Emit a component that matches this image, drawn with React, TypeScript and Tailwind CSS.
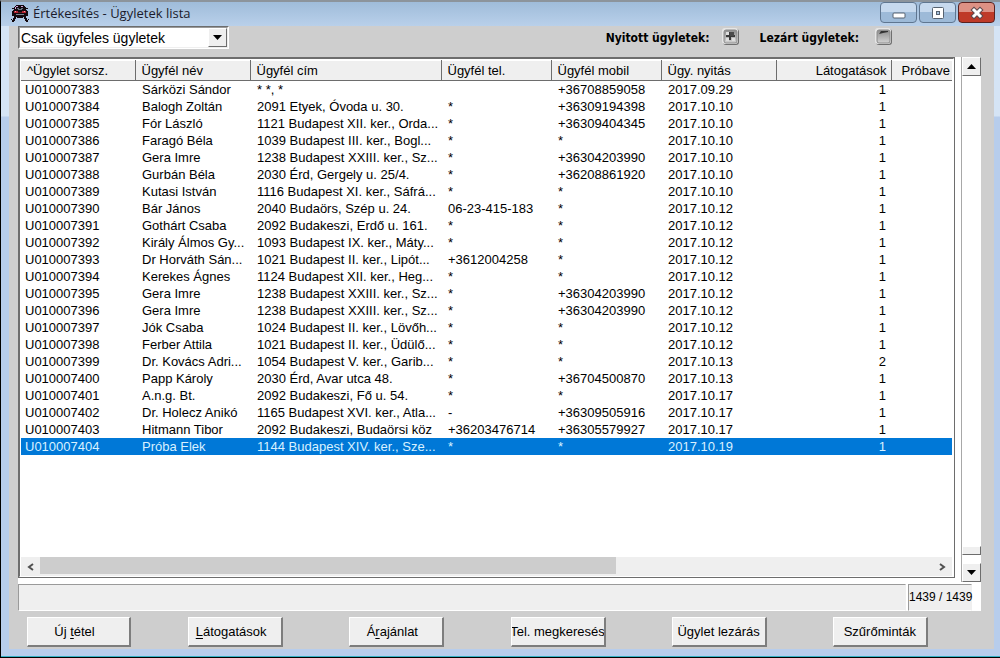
import { useState } from "react";
import clsx from "clsx";

interface Deal {
  id: string;
  name: string;
  address: string;
  phone: string;
  mobile: string;
  opened: string;
  visits: number;
}

const deals: Deal[] = [
  { id: "U010007383", name: "Sárközi Sándor", address: "* *, *", phone: "", mobile: "+36708859058", opened: "2017.09.29", visits: 1 },
  { id: "U010007384", name: "Balogh Zoltán", address: "2091 Etyek, Óvoda u. 30.", phone: "*", mobile: "+36309194398", opened: "2017.10.10", visits: 1 },
  { id: "U010007385", name: "Fór László", address: "1121 Budapest XII. ker., Orda...", phone: "*", mobile: "+36309404345", opened: "2017.10.10", visits: 1 },
  { id: "U010007386", name: "Faragó Béla", address: "1039 Budapest III. ker., Bogl...", phone: "*", mobile: "*", opened: "2017.10.10", visits: 1 },
  { id: "U010007387", name: "Gera Imre", address: "1238 Budapest XXIII. ker., Sz...", phone: "*", mobile: "+36304203990", opened: "2017.10.10", visits: 1 },
  { id: "U010007388", name: "Gurbán Béla", address: "2030 Érd, Gergely u. 25/4.", phone: "*", mobile: "+36208861920", opened: "2017.10.10", visits: 1 },
  { id: "U010007389", name: "Kutasi István", address: "1116 Budapest XI. ker., Sáfrá...", phone: "*", mobile: "*", opened: "2017.10.10", visits: 1 },
  { id: "U010007390", name: "Bár János", address: "2040 Budaörs, Szép u. 24.", phone: "06-23-415-183", mobile: "*", opened: "2017.10.12", visits: 1 },
  { id: "U010007391", name: "Gothárt Csaba", address: "2092 Budakeszi, Erdő u. 161.", phone: "*", mobile: "*", opened: "2017.10.12", visits: 1 },
  { id: "U010007392", name: "Király Álmos Gy...", address: "1093 Budapest IX. ker., Máty...", phone: "*", mobile: "*", opened: "2017.10.12", visits: 1 },
  { id: "U010007393", name: "Dr Horváth Sán...", address: "1021 Budapest II. ker., Lipót...", phone: "+3612004258", mobile: "*", opened: "2017.10.12", visits: 1 },
  { id: "U010007394", name: "Kerekes Ágnes", address: "1124 Budapest XII. ker., Heg...", phone: "*", mobile: "*", opened: "2017.10.12", visits: 1 },
  { id: "U010007395", name: "Gera Imre", address: "1238 Budapest XXIII. ker., Sz...", phone: "*", mobile: "+36304203990", opened: "2017.10.12", visits: 1 },
  { id: "U010007396", name: "Gera Imre", address: "1238 Budapest XXIII. ker., Sz...", phone: "*", mobile: "+36304203990", opened: "2017.10.12", visits: 1 },
  { id: "U010007397", name: "Jók Csaba", address: "1024 Budapest II. ker., Lövőh...", phone: "*", mobile: "*", opened: "2017.10.12", visits: 1 },
  { id: "U010007398", name: "Ferber Attila", address: "1021 Budapest II. ker., Üdülő...", phone: "*", mobile: "*", opened: "2017.10.12", visits: 1 },
  { id: "U010007399", name: "Dr. Kovács Adri...", address: "1054 Budapest V. ker., Garib...", phone: "*", mobile: "*", opened: "2017.10.13", visits: 2 },
  { id: "U010007400", name: "Papp Károly", address: "2030 Érd, Avar utca 48.", phone: "*", mobile: "+36704500870", opened: "2017.10.13", visits: 1 },
  { id: "U010007401", name: "A.n.g. Bt.", address: "2092 Budakeszi, Fő u. 54.", phone: "*", mobile: "*", opened: "2017.10.17", visits: 1 },
  { id: "U010007402", name: "Dr. Holecz Anikó", address: "1165 Budapest XVI. ker., Atla...", phone: "-", mobile: "+36309505916", opened: "2017.10.17", visits: 1 },
  { id: "U010007403", name: "Hitmann Tibor", address: "2092 Budakeszi, Budaörsi köz", phone: "+36203476714", mobile: "+36305579927", opened: "2017.10.17", visits: 1 },
  { id: "U010007404", name: "Próba Elek", address: "1144 Budapest XIV. ker., Sze...", phone: "*", mobile: "*", opened: "2017.10.19", visits: 1 },
];

const columns = [
  { label: "^Ügylet sorsz.", width: "w-[114px]", align: "text-left" },
  { label: "Ügyfél név", width: "w-[115px]", align: "text-left" },
  { label: "Ügyfél cím", width: "w-[191px]", align: "text-left" },
  { label: "Ügyfél tel.", width: "w-[110px]", align: "text-left" },
  { label: "Ügyfél mobil", width: "w-[110px]", align: "text-left" },
  { label: "Ügy. nyitás", width: "w-[115px]", align: "text-left" },
  { label: "Látogatások", width: "w-[115px]", align: "text-right" },
  { label: "Próbave", width: "w-auto", align: "text-left" },
];

const actions = [
  { before: "Új ", key: "t", after: "étel" },
  { before: "", key: "L", after: "átogatások" },
  { before: "Á", key: "r", after: "ajánlat" },
  { before: "Tel. megkeresés", key: "", after: "" },
  { before: "Ügylet lezárás", key: "", after: "" },
  { before: "Szűrőminták", key: "", after: "" },
];

const raised = "border border-t-white border-l-white border-r-[#6d6d6d] border-b-[#6d6d6d] bg-[#efefef]";

function CarIcon() {
  return (
    <svg width="18" height="19" viewBox="0 0 18 19" shapeRendering="crispEdges">
      <path d="M5 1h8v1h1v1h1v3h1v1h1v5h-2v2h1v2h1v2h-2v-1h-1v-2h-1v-2h-1v1H6v-1H5v2H4v2H3v1H1v-2h1v-2h1v-2H1V7h1V6h1V3h1V2h1z" fill="#140a0f" />
      <path d="M1 4h2v1H1zM15 4h2v1h-2z" fill="#140a0f" />
      <path d="M5 2h2v1H5zM10 2h2v1h-2zM4 3h1v2H4z" fill="#d3a4dc" />
      <path d="M6 4h2v1H6zM10 4h2v1h-2zM7 5h4v1H7z" fill="#667582" />
      <path d="M3 7h4v2H3zM11 7h4v2h-4z" fill="#b5222e" />
      <path d="M4 7h1v1H4zM13 7h1v1h-1z" fill="#f0a0a4" />
      <path d="M7 8h4v1H7z" fill="#5e1720" />
      <path d="M5 10h8v1H5z" fill="#7a8794" />
      <path d="M0 15h1v1H0zM17 15h1v1h-1z" fill="#140a0f" />
    </svg>
  );
}

function TitleBar() {
  const btn = "flex h-[21px] w-[37px] items-center justify-center rounded-sm border";
  return (
    <header className="flex h-6 items-start justify-between bg-gradient-to-b from-[#9fbcda] to-[#b9d0ea] pr-[5px] pl-2.5">
      <div className="flex items-center gap-1">
        <CarIcon />
        <h1 className="font-['Open_Sans',sans-serif] text-[13px] leading-[22px] whitespace-nowrap text-[#1b1b2b]">
          Értékesítés - Ügyletek lista
        </h1>
      </div>
      <div className="flex gap-0.5">
        <button aria-label="Kis méret" className={clsx(btn, "border-[#5f7690] bg-gradient-to-b from-[#c6d9ee] from-50% to-[#9dbad8] to-50%")}>
          <svg width="14" height="15" viewBox="0 0 14 15">
            <rect x="1" y="8" width="12" height="5" rx="1" fill="#fff" stroke="#566270" />
          </svg>
        </button>
        <button aria-label="Teljes méret" className={clsx(btn, "border-[#5f7690] bg-gradient-to-b from-[#c6d9ee] from-50% to-[#9dbad8] to-50%")}>
          <svg width="14" height="14" viewBox="0 0 14 14">
            <rect x="1.500" y="1.500" width="11" height="11" rx="1" fill="#fff" stroke="#566270" />
            <rect x="5.500" y="5.500" width="3" height="3" fill="#a9c3df" stroke="#566270" />
          </svg>
        </button>
        <button aria-label="Bezárás" className={clsx(btn, "border-[#5a2220] bg-gradient-to-b from-[#dd9184] from-50% to-[#bf3a28] to-50%")}>
          <svg width="16" height="14" viewBox="0 0 16 14">
            <path d="M5 4l6 6M11 4l-6 6" stroke="#5d4a4e" strokeWidth="5" strokeLinecap="square" />
            <path d="M5 4l6 6M11 4l-6 6" stroke="#fff" strokeWidth="3" strokeLinecap="square" />
          </svg>
        </button>
      </div>
    </header>
  );
}

function TogglePad({ labelId, on, onClick }: { labelId: string; on: boolean; onClick: () => void }) {
  return (
    <button aria-labelledby={labelId} aria-pressed={on} onClick={onClick} className="h-[18px] w-[18px]">
      <svg width="18" height="18" viewBox="0 0 18 18">
        <defs>
          <linearGradient id={`${labelId}-face`} x1="0" y1="0" x2="0" y2="1">
            <stop offset="0" stopColor="#8c8c8c" />
            <stop offset="1" stopColor="#d2d2d2" />
          </linearGradient>
        </defs>
        <rect x="1" y="1" width="16" height="16" rx="3" fill="#6f6f6f" />
        <rect x="0" y="0" width="16" height="16" rx="3" fill="#e6e6e6" />
        <rect x="2" y="2" width="13" height="13" rx="2" fill={`url(#${labelId}-face)`} stroke="#8a8a8a" />
        {on ? (
          <>
            <path d="M4 8h9M8 4v8" stroke="#3a3a3a" strokeWidth="2" />
            <path d="M8 4h4v4H8z" fill="#4a4a4a" />
            <path d="M4 4h3v3H4zM10 10h3v3h-3zM4 10h3v3H4z" fill="#dedede" />
          </>
        ) : (
          <path d="M4 6l2-3h7v1L8 5z" fill="#333" />
        )}
      </svg>
    </button>
  );
}

function FilterBar() {
  const [showOpen, setShowOpen] = useState(true);
  const [showClosed, setShowClosed] = useState(false);
  const label = "mt-1 font-['DejaVu_Sans_Condensed','DejaVu_Sans',sans-serif] text-[12px] font-bold whitespace-nowrap";

  return (
    <div className="flex h-[31px] items-start justify-between pr-[101px] pl-[9px]">
      <div className="relative flex w-[211px] border border-[#6d6d6d] border-r-white border-b-white">
        <select
          aria-label="Ügyletek szűrése"
          className="h-[21px] w-full appearance-none border border-[#9a9a9a] border-r-[#efefef] border-b-[#efefef] bg-white pl-px text-[14px] leading-[18px] outline-none"
        >
          <option>Csak ügyfeles ügyletek</option>
        </select>
        <span className={clsx("pointer-events-none absolute top-px right-px bottom-px flex w-[19px] items-center justify-center", raised)}>
          <svg width="9" height="5" viewBox="0 0 9 5">
            <path d="M0 0h9L4.500 5z" />
          </svg>
        </span>
      </div>
      <div className="flex items-center">
        <span id="open-deals" className={clsx(label, "mr-3")}>Nyitott ügyletek:</span>
        <TogglePad labelId="open-deals" on={showOpen} onClick={() => setShowOpen(!showOpen)} />
        <span id="closed-deals" className={clsx(label, "mr-4 ml-5")}>Lezárt ügyletek:</span>
        <TogglePad labelId="closed-deals" on={showClosed} onClick={() => setShowClosed(!showClosed)} />
      </div>
    </div>
  );
}

function DealTable() {
  const [selected, setSelected] = useState("U010007404");
  const cell = "overflow-hidden pl-[7px] whitespace-nowrap";

  return (
    <table className="w-full table-fixed border-collapse">
      <thead>
        <tr className="h-5">
          {columns.map((col, i) => (
            <th
              key={col.label}
              className={clsx(
                "overflow-hidden border-t border-b border-t-white border-b-[#6d6d6d] bg-[#efefef] p-0 font-normal whitespace-nowrap",
                i < columns.length - 1 && "border-r border-r-[#6d6d6d]",
                i === columns.length - 1 ? "pl-[10px]" : "pl-[6px]",
                col.align === "text-right" && "pr-1",
                col.width,
                col.align
              )}
            >
              {col.label}
            </th>
          ))}
        </tr>
      </thead>
      <tbody>
        {deals.map((deal) => (
          <tr
            key={deal.id}
            onClick={() => setSelected(deal.id)}
            className={clsx("h-[17px]", deal.id === selected && "bg-[#0078d7] text-[#d9f1ff]")}
          >
            <td className="overflow-hidden pl-1 whitespace-nowrap">{deal.id}</td>
            <td className={cell}>{deal.name}</td>
            <td className={cell}>{deal.address}</td>
            <td className={cell}>{deal.phone}</td>
            <td className={cell}>{deal.mobile}</td>
            <td className={cell}>{deal.opened}</td>
            <td className="overflow-hidden pr-[5px] text-right">{deal.visits}</td>
            <td />
          </tr>
        ))}
      </tbody>
    </table>
  );
}

function HorizontalScroll() {
  return (
    <div className="flex h-[19px] bg-[#efefef]">
      <button aria-label="Balra" className="flex w-[19px] items-center justify-center">
        <svg width="7" height="8" viewBox="0 0 7 8" fill="none" stroke="#505050" strokeWidth="2">
          <path d="M6 1L2 4l4 3" />
        </svg>
      </button>
      <div className="flex-1">
        <div className="h-[17px] w-[64.5%] bg-[#cdcdcd]" />
      </div>
      <button aria-label="Jobbra" className="flex w-[19px] items-center justify-center">
        <svg width="7" height="8" viewBox="0 0 7 8" fill="none" stroke="#505050" strokeWidth="2">
          <path d="M1 1l4 3-4 3" />
        </svg>
      </button>
    </div>
  );
}

function VerticalScroll() {
  return (
    <div className="flex w-5 flex-col border-l border-[#a8a8a8] bg-white">
      <button aria-label="Fel" className={clsx("flex h-[19px] items-center justify-center", raised)}>
        <svg width="9" height="5" viewBox="0 0 9 5">
          <path d="M0 5h9L4.500 0z" />
        </svg>
      </button>
      <div className="flex flex-1 flex-col justify-end pb-2">
        <div className={clsx("h-[9px]", raised)} />
      </div>
      <button aria-label="Le" className={clsx("flex h-[19px] items-center justify-center", raised)}>
        <svg width="9" height="5" viewBox="0 0 9 5">
          <path d="M0 0h9L4.500 5z" />
        </svg>
      </button>
    </div>
  );
}

export default function App() {
  return (
    <div className="flex min-h-screen flex-col border-t-2 border-b border-l border-t-[#8c949c] border-b-black border-l-black bg-[#bbcfea] font-['Liberation_Sans',Arial,sans-serif] text-[13px] leading-[17px] text-black">
      <TitleBar />
      <div className="flex flex-1 flex-col border-b border-[#35b0c4] bg-gradient-to-b from-[#d5e4f5] from-[90px] to-[#b7cdec] to-[91px] pr-1.5 pb-[7px] pl-2">
        <main className="flex flex-1 flex-col bg-[#cecece]">
          <FilterBar />
          <div className="mr-[13px] ml-[9px] flex flex-1 flex-col bg-white">
            <div className="flex flex-1">
              <div className="mr-1.5 mb-1 flex min-w-0 flex-1 flex-col border border-[#6d6d6d]">
                <div className="flex flex-1 flex-col border border-t-[#6d6d6d] border-r-white border-b-white border-l-[#6d6d6d] px-px pt-px">
                  <div className="flex-1">
                    <DealTable />
                  </div>
                  <HorizontalScroll />
                </div>
              </div>
              <VerticalScroll />
            </div>
            <div className="mt-0.5 flex h-[27px] gap-0.5 pr-[9px]">
              <div className="flex-1 border border-[#9a9a9a] border-r-[#efefef] border-b-white bg-[#efefef]" />
              <div className="w-16 border border-[#9a9a9a] border-r-[#efefef] border-b-white bg-[#efefef] text-center text-[12px] leading-[25px] whitespace-nowrap">
                1439 / 1439
              </div>
            </div>
          </div>
          <footer className="grid grid-cols-6 pt-1.5 pb-[2px] pl-[18px]">
            {actions.map((action, i) => (
              <button
                key={action.after + action.before}
                className={clsx(
                  "flex h-[30px] items-center justify-center overflow-hidden border-t border-r-2 border-b-2 border-l border-t-white border-r-[#7d7d7d] border-b-[#7d7d7d] border-l-white bg-[#efefef] whitespace-nowrap",
                  i === 0 ? "w-[104px]" : "w-[95px]",
                  action.key && "pr-2"
                )}
              >
                <span>
                  {action.before}
                  <span className="underline underline-offset-2">{action.key}</span>
                  {action.after}
                </span>
              </button>
            ))}
          </footer>
        </main>
      </div>
    </div>
  );
}
